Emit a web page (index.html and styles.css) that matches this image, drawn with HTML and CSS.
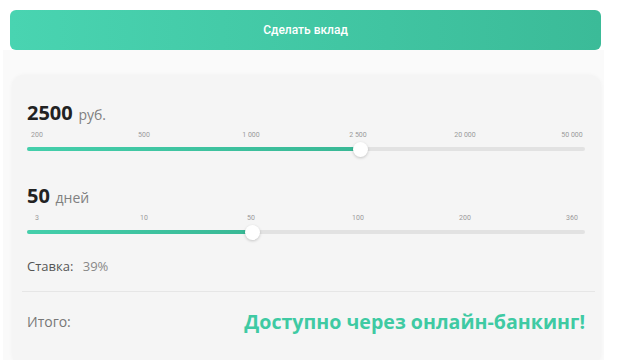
FILE: index.html
```html
<!DOCTYPE html>
<html lang="ru">
<head>
    <meta charset="UTF-8">
    <meta name="viewport" content="width=device-width, initial-scale=1.0">
    <title>Вклад</title>
    <link rel="stylesheet" href="styles.css">
</head>
<body>

    <button class="main-button">Сделать вклад</button>

    <div class="panel">
        <div class="calc-card">

            <!-- Сумма -->
            <div class="field">
                <div class="value"><strong>2500</strong> руб.</div>
                <div class="ticks">
                    <span>200</span>
                    <span>500</span>
                    <span>1 000</span>
                    <span>2 500</span>
                    <span>20 000</span>
                    <span>50 000</span>
                </div>
                <div class="track">
                    <div class="fill" style="width: 59.7%"></div>
                    <div class="thumb" style="left: 59.7%"></div>
                </div>
            </div>

            <!-- Срок -->
            <div class="field">
                <div class="value"><strong>50</strong> дней</div>
                <div class="ticks">
                    <span>3</span>
                    <span>10</span>
                    <span>50</span>
                    <span>100</span>
                    <span>200</span>
                    <span>360</span>
                </div>
                <div class="track">
                    <div class="fill" style="width: 40.3%"></div>
                    <div class="thumb" style="left: 40.3%"></div>
                </div>
            </div>

            <div class="rate">Ставка: <span>39%</span></div>

            <div class="total">
                <span class="total-label">Итого:</span>
                <span class="total-value">Доступно через онлайн-банкинг!</span>
            </div>
        </div>
    </div>

</body>
</html>
```

FILE: styles.css
```css
* {
    box-sizing: border-box;
    margin: 0;
    padding: 0;
}

body {
    font-family: "Open Sans", Arial, sans-serif;
    background-color: #fff;
    padding: 10px 16px 0 10px;
    height: 360px;
    overflow: hidden;
}

.main-button {
    display: block;
    width: 100%;
    height: 40px;
    border: none;
    border-radius: 6px;
    background: linear-gradient(to right, #49d4b1, #3bbb98);
    color: #fff;
    font-family: Roboto, Arial, sans-serif;
    font-size: 12px;
    font-weight: 500;
    cursor: pointer;
}

.panel {
    margin: 0 -3px 0 -7px;
    padding: 25px 3px 0 9px;
    background-color: #fafafa;
    height: 320px;
}

.calc-card {
    background-color: #f5f5f5;
    border-radius: 12px;
    box-shadow: 0 0 4px rgba(0, 0, 0, 0.04);
    padding: 26px 16px 0 15px;
    height: 290px;
}

.field + .field {
    margin-top: 33px;
}

.value {
    font-size: 14px;
    color: #808080;
    line-height: 24px;
}

.value strong {
    font-size: 20px;
    font-weight: 700;
    color: #222;
    margin-right: 2px;
}

.ticks {
    display: flex;
    justify-content: space-between;
    padding: 0 13px 0 10px;
    margin-top: 3px;
    font-family: Roboto, Arial, sans-serif;
    font-size: 7px;
    color: #9a9a9a;
    line-height: 10px;
}

.ticks span {
    width: 0;
    display: flex;
    justify-content: center;
    white-space: nowrap;
}

.track {
    position: relative;
    height: 4px;
    margin-top: 7px;
    border-radius: 2px;
    background-color: #e2e2e2;
}

.fill {
    height: 100%;
    border-radius: 2px;
    background: linear-gradient(to right, #44cfab, #39b895);
}

.thumb {
    position: absolute;
    top: 50%;
    width: 15px;
    height: 15px;
    margin: -7px 0 0 -7px;
    border-radius: 50%;
    background-color: #fff;
    box-shadow: 0 1px 3px rgba(0, 0, 0, 0.2);
}

.rate {
    margin-top: 23px;
    font-size: 13px;
    color: #555;
    line-height: 18px;
}

.rate span {
    margin-left: 6px;
    color: #888;
}

.total {
    display: flex;
    justify-content: space-between;
    align-items: center;
    margin: 16px -10px 0 -5px;
    padding: 16px 10px 0 5px;
    border-top: 1px solid #e6e6e6;
}

.total-label {
    font-size: 14px;
    color: #777;
}

.total-value {
    font-size: 19.6px;
    font-weight: 700;
    color: #3fcaa3;
}
```
